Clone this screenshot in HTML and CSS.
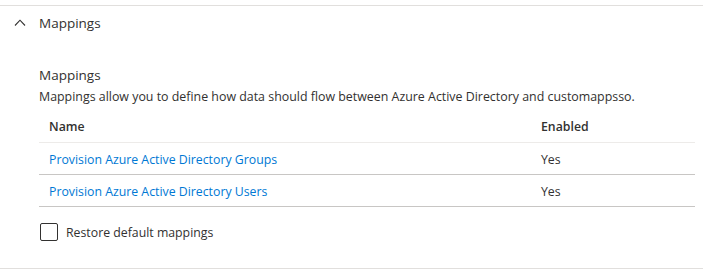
FILE: index.html
```html
<!DOCTYPE html>
<html>

    <head>
        <!-- Meta Data -->
        <meta charset="UTF-8">

        <!-- Title -->
        <title>Mappings</title>

        <!-- Style -->
        <link rel="stylesheet" href="styles.css">
    </head>

    <body>
        <!-- Collapsible section -->
        <div class="section">
            <div class="section-header">
                <svg class="chevron" width="12" height="7" viewBox="0 0 12 7">
                    <path d="M1 6.5 L6 1.2 L11 6.5" fill="none" stroke="#323130" stroke-width="1.1"/>
                </svg>
                <span class="section-title">Mappings</span>
            </div>

            <div class="section-body">
                <div class="subtitle">Mappings</div>
                <div class="description">Mappings allow you to define how data should flow between Azure Active Directory and customappsso.</div>

                <table class="mappings-table">
                    <thead>
                        <tr>
                            <th class="col-name">Name</th>
                            <th>Enabled</th>
                        </tr>
                    </thead>
                    <tbody>
                        <tr>
                            <td><a href="#">Provision Azure Active Directory Groups</a></td>
                            <td>Yes</td>
                        </tr>
                        <tr>
                            <td><a href="#">Provision Azure Active Directory Users</a></td>
                            <td>Yes</td>
                        </tr>
                    </tbody>
                </table>

                <label class="checkbox-row">
                    <span class="checkbox"></span>
                    <span>Restore default mappings</span>
                </label>
            </div>
        </div>
    </body>

</html>
```

FILE: styles.css
```css
html {
    background-color: #fff;
}

body {
    margin: 0;
    font-family: "Open Sans", "Liberation Sans", sans-serif;
    font-size: 12.3px;
    color: #323130;
}

.section {
    width: 703px;
    margin-top: 5px;
    border-top: 1px solid #e1dfdd;
    border-bottom: 1px solid #e1dfdd;
}

.section-header {
    display: flex;
    align-items: center;
    height: 34px;
    padding-left: 14px;
}

.chevron {
    margin-right: 13px;
    margin-top: -2px;
}

.section-title,
.subtitle {
    font-size: 13.5px;
}

.section-body {
    padding: 24px 8px 27px 39px;
}

.subtitle,
.description {
    line-height: 22px;
}

.description {
    font-size: 12.4px;
}

.mappings-table {
    width: 656px;
    margin-top: 2px;
    border-collapse: collapse;
}

.mappings-table th {
    height: 32px;
    padding: 0 10px;
    text-align: left;
    font-weight: 600;
    border-bottom: 1px solid #edebe9;
}

.mappings-table .col-name {
    width: 472px;
}

.mappings-table td {
    height: 29px;
    padding: 2px 10px 0;
    border-bottom: 1px solid #c8c6c4;
}

.mappings-table a {
    color: #0078d4;
    text-decoration: none;
}

.checkbox-row {
    display: flex;
    align-items: center;
    margin-top: 16px;
    margin-left: 1px;
}

.checkbox {
    box-sizing: border-box;
    width: 18px;
    height: 18px;
    margin-right: 8px;
    border: 1px solid #323130;
    border-radius: 2px;
}
```
